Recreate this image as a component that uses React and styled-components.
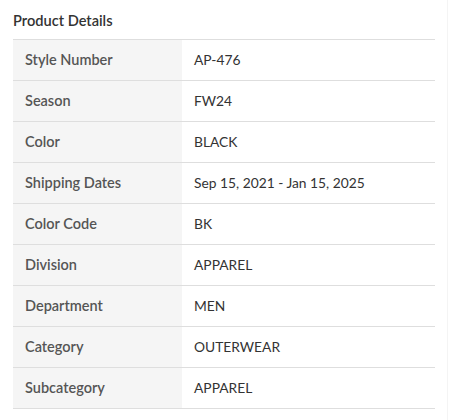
import React from "react";
import styled, { createGlobalStyle } from "styled-components";

const GlobalStyle = createGlobalStyle`
  body {
    margin: 0;
    background: #fff;
    font-family: Lato, "Open Sans", sans-serif;
  }
`;

const details = [
  ["Style Number", "AP-476"],
  ["Season", "FW24"],
  ["Color", "BLACK"],
  ["Shipping Dates", "Sep 15, 2021 - Jan 15, 2025"],
  ["Color Code", "BK"],
  ["Division", "APPAREL"],
  ["Department", "MEN"],
  ["Category", "OUTERWEAR"],
  ["Subcategory", "APPAREL"],
];

function App() {
  return (
    <>
      <GlobalStyle />
      <Panel>
        <Title>Product Details</Title>
        <Table>
          <tbody>
            {details.map(([label, value]) => (
              <Row key={label}>
                <Label>{label}</Label>
                <Value>{value}</Value>
              </Row>
            ))}
          </tbody>
        </Table>
      </Panel>
    </>
  );
}

export default App;

const Panel = styled.div`
  width: 448px;
  height: 420px;
  padding: 12px 13px 0;
  box-sizing: border-box;
  border-right: 1px solid #f4f4f4;
`;

const Title = styled.h2`
  margin: 0 0 9px;
  font-size: 14.6px;
  line-height: 18px;
  font-weight: 600;
  color: #333;
`;

const Table = styled.table`
  width: 422px;
  border-collapse: collapse;
  border-top: 1px solid #dedede;
`;

const Row = styled.tr`
  height: 41px;
  border-bottom: 1px solid #dedede;
`;

const Label = styled.td`
  width: 145px;
  padding: 0 12px 1px;
  background: #f5f5f5;
  font-size: 14.5px;
  font-weight: 600;
  color: #555;
`;

const Value = styled.td`
  padding: 0 12px 1px;
  font-size: 13.8px;
  color: #333;
`;
